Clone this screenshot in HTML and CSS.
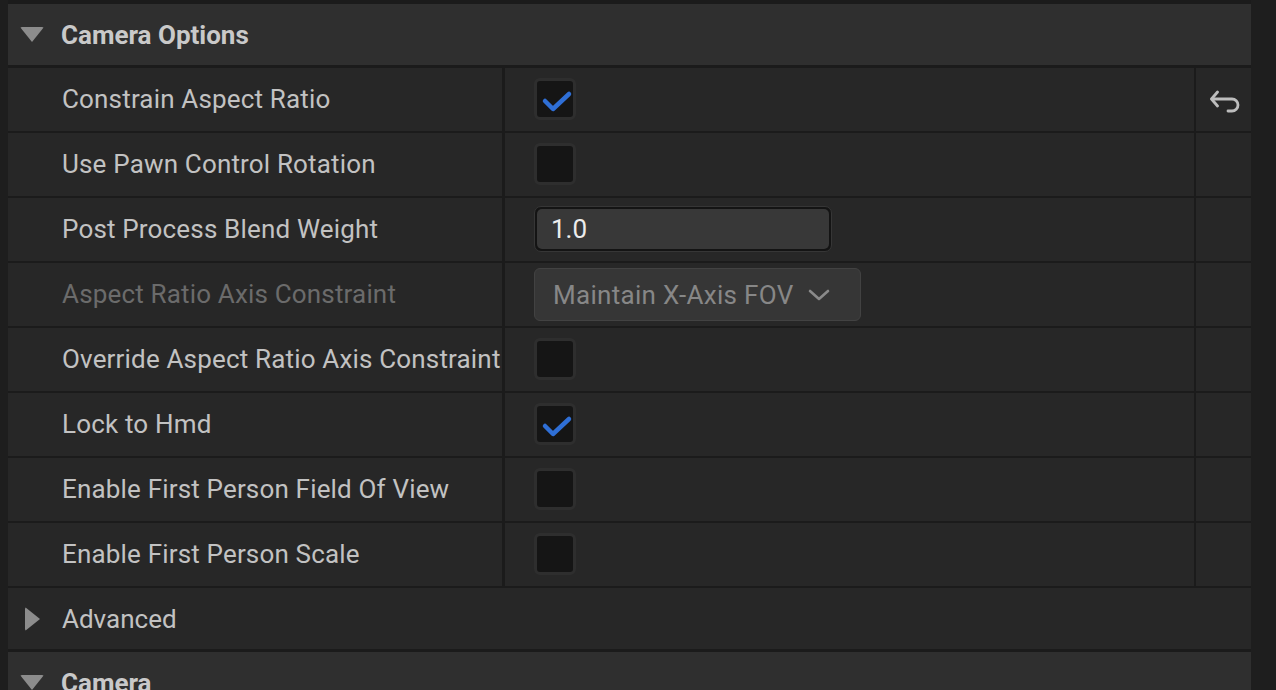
FILE: index.html
```html
<!DOCTYPE html>
<html>
<head>
<meta charset="utf-8">
<link rel="stylesheet" href="styles.css">
</head>
<body>
<div class="panel">
  <div class="header">
    <span class="tri tri-down"></span>
    <span class="htext">Camera Options</span>
  </div>

  <div class="row">
    <div class="name">Constrain Aspect Ratio</div>
    <div class="value">
      <span class="check on"><svg viewBox="0 0 36 36" width="36" height="36"><path d="M8 20 L16 28 L32 13" fill="none" stroke="#2f6fd6" stroke-width="4.5" stroke-linecap="round" stroke-linejoin="round"/></svg></span>
    </div>
    <div class="reset">
      <svg viewBox="0 0 30 24" width="30" height="24"><path d="M7.5 3 L1.5 10 L7.5 17" fill="none" stroke="#bdbdbd" stroke-width="2.8" stroke-linecap="round" stroke-linejoin="round"/><path d="M2 10 H22 A6 6 0 0 1 22 22 H18" fill="none" stroke="#bdbdbd" stroke-width="2.8" stroke-linecap="round" stroke-linejoin="round"/></svg>
    </div>
  </div>

  <div class="row">
    <div class="name">Use Pawn Control Rotation</div>
    <div class="value"><span class="check"></span></div>
    <div class="reset"></div>
  </div>

  <div class="row">
    <div class="name">Post Process Blend Weight</div>
    <div class="value"><div class="numbox"><span>1.0</span></div></div>
    <div class="reset"></div>
  </div>

  <div class="row">
    <div class="name disabled">Aspect Ratio Axis Constraint</div>
    <div class="value">
      <div class="combo"><span>Maintain X-Axis FOV</span>
        <svg viewBox="0 0 24 14" width="24" height="14"><path d="M3 3 L12 11 L21 3" fill="none" stroke="#8a8a8a" stroke-width="2.6" stroke-linecap="round" stroke-linejoin="round"/></svg>
      </div>
    </div>
    <div class="reset"></div>
  </div>

  <div class="row">
    <div class="name">Override Aspect Ratio Axis Constraint</div>
    <div class="value"><span class="check"></span></div>
    <div class="reset"></div>
  </div>

  <div class="row">
    <div class="name">Lock to Hmd</div>
    <div class="value">
      <span class="check on"><svg viewBox="0 0 36 36" width="36" height="36"><path d="M8 20 L16 28 L32 13" fill="none" stroke="#2f6fd6" stroke-width="4.5" stroke-linecap="round" stroke-linejoin="round"/></svg></span>
    </div>
    <div class="reset"></div>
  </div>

  <div class="row">
    <div class="name">Enable First Person Field Of View</div>
    <div class="value"><span class="check"></span></div>
    <div class="reset"></div>
  </div>

  <div class="row last">
    <div class="name">Enable First Person Scale</div>
    <div class="value"><span class="check"></span></div>
    <div class="reset"></div>
  </div>

  <div class="subheader">
    <span class="tri tri-right"></span>
    <span class="stext">Advanced</span>
  </div>

  <div class="header camera">
    <span class="tri tri-down"></span>
    <span class="htext">Camera</span>
  </div>
</div>
</body>
</html>
```

FILE: styles.css
```css
html, body {
  margin: 0;
  padding: 0;
  background: #1e1e1e;
  width: 1276px;
  height: 690px;
  overflow: hidden;
  font-family: Roboto, "Noto Sans", "Liberation Sans", sans-serif;
}

.panel {
  margin-left: 8px;
  padding-top: 4px;
  width: 1243px;
  background: #1b1b1b;
  display: flex;
  flex-direction: column;
}

.header {
  height: 61px;
  background: #2f2f2f;
  display: flex;
  align-items: center;
  margin-bottom: 3px;
  flex-shrink: 0;
}

.header.camera {
  margin-bottom: 0;
  height: 61px;
}

.htext {
  font-weight: 700;
  font-size: 26px;
  color: #c9c9c9;
  margin-left: 17px;
}

.tri {
  display: inline-block;
  width: 0;
  height: 0;
}

.tri-down {
  margin-left: 12px;
  border-left: 12px solid transparent;
  border-right: 12px solid transparent;
  border-top: 15px solid #8c8c8c;
  border-radius: 2px;
}

.tri-right {
  margin-left: 17px;
  border-top: 12px solid transparent;
  border-bottom: 12px solid transparent;
  border-left: 15px solid #8c8c8c;
  border-radius: 2px;
}

.row {
  display: flex;
  height: 63px;
  margin-bottom: 2px;
  flex-shrink: 0;
}

.name {
  width: 494px;
  background: #272727;
  display: flex;
  align-items: center;
  padding-left: 54px;
  box-sizing: border-box;
  font-size: 26px;
  color: #c2c2c2;
  white-space: nowrap;
  letter-spacing: 0.17px;
  padding-bottom: 1px;
}

.name.disabled {
  color: #6b6b6b;
}

.value {
  width: 689px;
  margin-left: 3px;
  background: #272727;
  display: flex;
  align-items: center;
  padding-left: 29px;
  box-sizing: border-box;
}

.reset {
  flex: 1;
  margin-left: 2px;
  background: #272727;
  display: flex;
  align-items: center;
  padding-left: 14px;
}

.reset svg {
  display: block;
  margin-top: 2px;
}

.check {
  width: 36px;
  height: 36px;
  background: #151515;
  border: 3px solid #2e2e2e;
  border-radius: 6px;
  display: inline-flex;
  align-items: center;
  justify-content: center;
  margin-top: -1px;
}

.check svg {
  display: block;
}

.numbox {
  width: 298px;
  height: 46px;
  box-sizing: border-box;
  border: 1px solid #363636;
  border-radius: 7px;
  background: #141414;
  padding: 2px;
  display: flex;
  margin-top: -1px;
}

.numbox span {
  flex: 1;
  background: #383838;
  border-radius: 5px;
  display: flex;
  align-items: center;
  padding-left: 14px;
  font-size: 26px;
  color: #ececec;
}

.combo {
  width: 327px;
  height: 53px;
  box-sizing: border-box;
  background: #363636;
  border: 1px solid #424242;
  border-radius: 6px;
  display: flex;
  align-items: center;
  padding-left: 18px;
  font-size: 26px;
  color: #878787;
  gap: 13px;
  letter-spacing: 0.3px;
}

.combo svg {
  display: block;
}

.subheader {
  height: 61px;
  background: #272727;
  display: flex;
  align-items: center;
  margin-bottom: 3px;
  flex-shrink: 0;
}

.stext {
  font-size: 26px;
  color: #c2c2c2;
  margin-left: 22px;
}
```
